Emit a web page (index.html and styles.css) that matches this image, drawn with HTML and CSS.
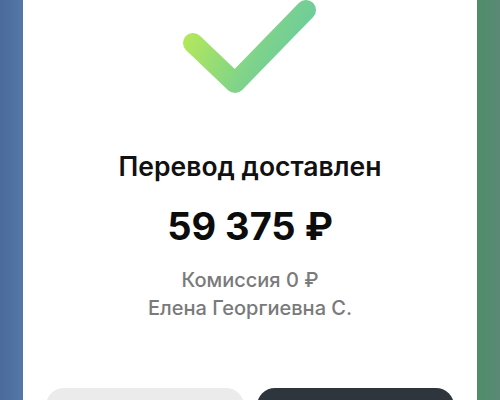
FILE: index.html
```html
<!DOCTYPE html>
<html lang="ru">
<head>
<meta charset="utf-8">
<link rel="stylesheet" href="styles.css">
</head>
<body>
<div class="screen">
  <div class="card">
    <svg class="check" width="160" height="100" viewBox="170 0 160 100">
      <defs>
        <linearGradient id="g" x1="185" y1="35" x2="300" y2="95" gradientUnits="userSpaceOnUse">
          <stop offset="0" stop-color="#b4e85a"/>
          <stop offset="0.55" stop-color="#7fd38a"/>
          <stop offset="1" stop-color="#63c9a6"/>
        </linearGradient>
      </defs>
      <path d="M193 43 L235 83 L306 10" fill="none" stroke="url(#g)" stroke-width="20" stroke-linecap="round" stroke-linejoin="round"/>
    </svg>
    <div class="title">Перевод доставлен</div>
    <div class="amount">59 375 ₽</div>
    <div class="meta">
      <div>Комиссия 0 ₽</div>
      <div>Елена Георгиевна С.</div>
    </div>
    <div class="buttons">
      <div class="btn btn-light"></div>
      <div class="btn btn-dark"></div>
    </div>
  </div>
</div>
</body>
</html>
```

FILE: styles.css
```css
html, body {
  margin: 0;
  padding: 0;
  height: 400px;
  overflow: hidden;
}
.screen {
  height: 400px;
  overflow: hidden;
  display: flex;
  justify-content: center;
  background: linear-gradient(90deg, #4a6a9a 0%, #5276a6 4%, #4d7a8c 50%, #4f8d6a 96%, #5a8a76 100%);
}
.card {
  width: 454px;
  background: #ffffff;
  display: flex;
  flex-direction: column;
  align-items: center;
  font-family: Inter, "Noto Sans", sans-serif;
  padding: 0 23px;
  box-sizing: border-box;
}
.check {
  display: block;
  flex: none;
}
.title {
  margin-top: 51px;
  font-size: 26.5px;
  line-height: 30px;
  font-weight: 600;
  color: #111;
}
.amount {
  margin-top: 23px;
  font-size: 38px;
  line-height: 44px;
  font-weight: 700;
  color: #0c0c0c;
}
.meta {
  margin-top: 18px;
  font-size: 20px;
  line-height: 28px;
  color: #7a7a7a;
  font-weight: 500;
  text-align: center;
}
.buttons {
  margin-top: 66px;
  align-self: stretch;
  display: flex;
  gap: 13px;
  flex: none;
}
.btn {
  flex: 1;
  height: 52px;
  border-radius: 18px;
}
.btn-light {
  background: #ebebeb;
}
.btn-dark {
  background: #2f353c;
}
```
